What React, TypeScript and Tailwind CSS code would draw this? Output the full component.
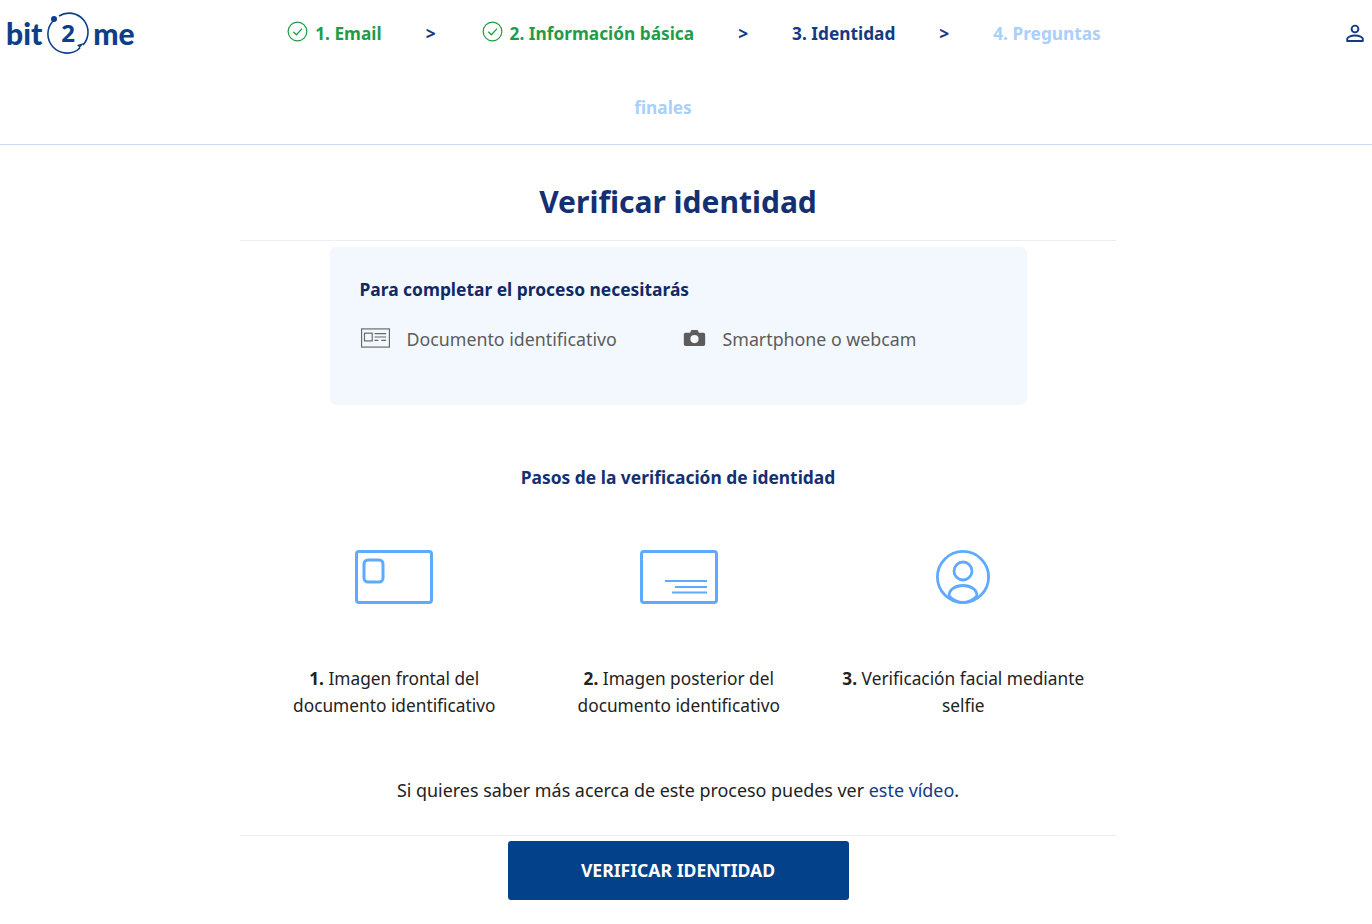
const font = { fontFamily: '"Noto Sans", sans-serif' }

function CheckIcon() {
  return (
    <svg viewBox="0 0 22 22" className="mr-[7px] inline-block h-[21px] w-[21px] align-[-2px]" fill="none" stroke="#1f9d45" strokeWidth="1.3">
      <circle cx="11" cy="11" r="9.8" />
      <path d="M6.6 11.2l3.2 3.2 6-6.4" />
    </svg>
  )
}

function Sep({ children, wide }: { children: string; wide?: boolean }) {
  return <span className={wide ? 'ml-[44px] mr-[46px] text-[#143a84]' : 'mx-[44px] text-[#143a84]'}>{children}</span>
}

function Logo() {
  return (
    <div className="flex items-center pl-[6px] text-[30px] font-black leading-none text-[#0c3f88]" style={{ fontFamily: 'Lato, sans-serif' }}>
      <span>bit</span>
      <svg viewBox="0 0 42 42" className="ml-[5px] mr-[4px] h-[42px] w-[42px] shrink-0">
        <path d="M7 8A19 19 0 0 0 33 36M36 33A19 19 0 0 0 12 4" fill="none" stroke="#0c3f88" strokeWidth="1.6" />
        <circle cx="7" cy="7" r="3" fill="#0c3f88" />
        <path d="M37 31l-7 2 2 2-1 3z" fill="#0c3f88" />
        <text x="21" y="30" textAnchor="middle" fontSize="24" fontWeight="700" fill="#0c3f88" style={font}>2</text>
      </svg>
      <span>me</span>
    </div>
  )
}

function Steps() {
  return (
    <nav className="-mt-[3px] ml-[79px] w-[900px] text-center text-[17.3px] font-bold leading-[74px] text-[#143a84]">
      <span className="ml-[62px] text-[#1f9d45]"><CheckIcon />1. Email</span>
      <Sep wide>&gt;</Sep>
      <span className="text-[#1f9d45]"><CheckIcon />2. Información básica</span>
      <Sep>&gt;</Sep>
      <span>3. Identidad</span>
      <Sep>&gt;</Sep>
      <span className="text-[#a9d0fb]">4. Preguntas finales</span>
    </nav>
  )
}

function UserIcon() {
  return (
    <svg viewBox="0 0 20 20" className="mr-[7px] ml-auto mt-[23px] h-[20px] w-[20px] self-start" fill="none" stroke="#143a84" strokeWidth="1.9">
      <circle cx="10" cy="6" r="3.4" />
      <path d="M2.2 18v-2.200c0-1.600 3.400-3.300 7.800-3.300s7.800 1.700 7.800 3.300V18z" strokeLinejoin="round" />
    </svg>
  )
}

function Header() {
  return (
    <header className="flex h-[145px] items-start border-b border-[#c9dcf5]">
      <div className="mt-[12px] w-[134px] shrink-0"><Logo /></div>
      <Steps />
      <UserIcon />
    </header>
  )
}

function DocIcon() {
  return (
    <svg viewBox="0 0 30 20" className="-mt-[3px] ml-px h-[20px] w-[29px]" fill="none" stroke="#666" strokeWidth="1.2">
      <rect x="0.6" y="0.6" width="28.8" height="18.8" />
      <rect x="3.600" y="5" width="8" height="8" />
      <path d="M14 5.500h12M14 9h12M14 12.500h4M21 12.500h5" />
    </svg>
  )
}

function CameraIcon() {
  return (
    <svg viewBox="0 0 24 18" className="-mt-[3px] h-[16px] w-[23px]">
      <path fillRule="evenodd" fill="#5c5c5c" d="M2 3h5l1.500-3h7L17 3h5a2 2 0 0 1 2 2v11a2 2 0 0 1-2 2H2a2 2 0 0 1-2-2V5a2 2 0 0 1 2-2zm10 2.600a4.600 4.600 0 1 0 0 9.200 4.600 4.600 0 0 0 0-9.200z" />
    </svg>
  )
}

function FrontIcon() {
  return (
    <svg viewBox="0 0 78 54" className="h-[54px] w-[78px]" fill="none" stroke="#5eaaff" strokeWidth="3">
      <rect x="1.500" y="1.500" width="75" height="51" rx="2.500" />
      <rect x="9" y="10" width="19" height="22" rx="4" />
    </svg>
  )
}

function BackIcon() {
  return (
    <svg viewBox="0 0 78 54" className="h-[54px] w-[78px]" fill="none" stroke="#5eaaff" strokeWidth="3">
      <rect x="1.500" y="1.500" width="75" height="51" rx="2.500" />
      <path d="M25 31h42M35 37h32M32 42.500h35" strokeWidth="2" />
    </svg>
  )
}

function FaceIcon() {
  return (
    <svg viewBox="0 0 54 54" className="h-[54px] w-[54px]" fill="none" stroke="#5eaaff" strokeWidth="2.800">
      <circle cx="27" cy="27" r="25.600" />
      <circle cx="27" cy="21" r="9" />
      <path d="M13 46c0-6.500 6-10.500 14-10.500S41 39.500 41 46" />
      <path d="M13 46c4 4 9 6.500 14 6.500S37 50 41 46" />
    </svg>
  )
}

const steps = [
  { icon: <FrontIcon />, num: '1.', lines: ['Imagen frontal del', 'documento identificativo'] },
  { icon: <BackIcon />, num: '2.', lines: ['Imagen posterior del', 'documento identificativo'] },
  { icon: <FaceIcon />, num: '3.', lines: ['Verificación facial mediante', 'selfie'] },
]

export default function App() {
  return (
    <div className="min-h-[924px] bg-white" style={font}>
      <Header />
      <div className="pr-[16px]">
        <main className="mx-auto w-[876px]">
          <h1 className="flex h-[96px] items-center justify-center border-b border-[#eeeeee] pt-[18px] text-[30px] font-bold text-[#143072]">
            Verificar identidad
          </h1>
          <section className="mx-auto mt-[6px] h-[158px] w-[697px] rounded-md bg-[#f3f8ff] px-[30px] pt-[30px]">
            <h2 className="text-[17.4px] font-bold leading-[24px] text-[#0f2a66]">Para completar el proceso necesitarás</h2>
            <div className="mt-[26px] flex items-center text-[17.8px] leading-[24px] text-[#5c5c5c]">
              <DocIcon />
              <span className="ml-[17px] w-[276px]">Documento identificativo</span>
              <CameraIcon />
              <span className="ml-[17px]">Smartphone o webcam</span>
            </div>
          </section>
          <h3 className="mt-[60px] text-center text-[17.4px] font-bold leading-[24px] text-[#143072]">Pasos de la verificación de identidad</h3>
          <div className="ml-[12px] mt-[61px] grid grid-cols-[284.5px_284.5px_284.5px]">
            {steps.map((s) => (
              <div key={s.num} className="flex flex-col items-center text-center text-[17.3px] leading-[27px] text-[#222222]">
                {s.icon}
                <p className="mt-[61px]">
                  <b>{s.num}</b> {s.lines[0]}
                  <br />
                  {s.lines[1]}
                </p>
              </div>
            ))}
          </div>
          <p className="mt-[58px] text-center text-[17.9px] leading-[27px] text-[#222222]">
            Si quieres saber más acerca de este proceso puedes ver <a className="text-[#143a84]">este vídeo</a>.
          </p>
          <div className="mt-[31px] border-t border-[#eeeeee] pt-[5px]">
            <button className="mx-auto block h-[59px] w-[341px] rounded-[3px] bg-[#04418b] text-[17.6px] font-bold text-white">
              VERIFICAR IDENTIDAD
            </button>
          </div>
        </main>
      </div>
    </div>
  )
}
